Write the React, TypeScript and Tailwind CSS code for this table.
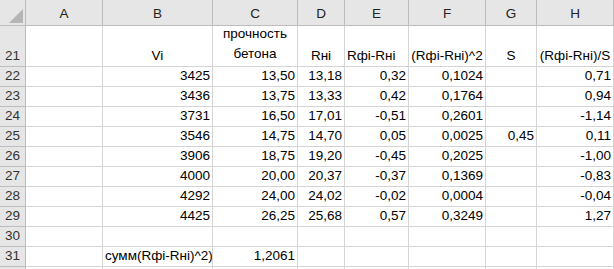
import React from 'react'

const cols = ['A', 'B', 'C', 'D', 'E', 'F', 'G', 'H']

type Row = {
  n: number
  b?: string
  c?: string
  d?: string
  e?: string
  f?: string
  g?: string
  h?: string
}

const data: Row[] = [
  { n: 22, b: '3425', c: '13,50', d: '13,18', e: '0,32', f: '0,1024', h: '0,71' },
  { n: 23, b: '3436', c: '13,75', d: '13,33', e: '0,42', f: '0,1764', h: '0,94' },
  { n: 24, b: '3731', c: '16,50', d: '17,01', e: '-0,51', f: '0,2601', h: '-1,14' },
  { n: 25, b: '3546', c: '14,75', d: '14,70', e: '0,05', f: '0,0025', g: '0,45', h: '0,11' },
  { n: 26, b: '3906', c: '18,75', d: '19,20', e: '-0,45', f: '0,2025', h: '-1,00' },
  { n: 27, b: '4000', c: '20,00', d: '20,37', e: '-0,37', f: '0,1369', h: '-0,83' },
  { n: 28, b: '4292', c: '24,00', d: '24,02', e: '-0,02', f: '0,0004', h: '-0,04' },
  { n: 29, b: '4425', c: '26,25', d: '25,68', e: '0,57', f: '0,3249', h: '1,27' },
  { n: 30 },
]

function RowHead({ n }: { n?: number }) {
  return (
    <div className="bg-[#e6e6e6] border-r border-b border-[#bcbcbc] flex items-end justify-center pb-[2px] text-[#333]">
      {n}
    </div>
  )
}

function Num({ v }: { v?: string }) {
  return (
    <div className="border-r border-b border-[#d4d4d4] flex items-end justify-end pr-[2px] pb-[2px] whitespace-nowrap">
      {v}
    </div>
  )
}

export default function App() {
  return (
    <div className="w-[614px] h-[269px] overflow-hidden bg-white text-black text-[13.5px] leading-[17px] font-['Liberation_Sans',Arial,sans-serif]">
      <div className="grid grid-cols-[26px_77px_110px_85px_47px_64px_77px_51px_77px] grid-rows-[26px_41px_repeat(11,20px)]">
        {/* corner */}
        <div className="bg-[#e6e6e6] border-r border-b border-[#bcbcbc] flex items-end justify-end pr-[2px] pb-[2px]">
          <svg width="14" height="14" viewBox="0 0 14 14">
            <polygon points="14,0 14,14 0,14" fill="#b5b5b5" />
          </svg>
        </div>
        {cols.map((c) => (
          <div
            key={c}
            className="bg-[#e6e6e6] border-r border-b border-[#bcbcbc] flex items-end justify-center pb-[3px] text-[#222]"
          >
            {c}
          </div>
        ))}

        {/* row 21 - headers */}
        <RowHead n={21} />
        <div className="border-r border-b border-[#d4d4d4]" />
        <div className="border-r border-b border-[#d4d4d4] flex items-end justify-center pb-[2px]">Vi</div>
        <div className="border-r border-b border-[#d4d4d4] flex flex-col items-center justify-end pb-[2px] leading-[20px]">
          <span>прочность</span>
          <span>бетона</span>
        </div>
        <div className="border-r border-b border-[#d4d4d4] flex items-end justify-center pb-[2px]">Rнi</div>
        <div className="border-r border-b border-[#d4d4d4] flex items-end pl-[2px] pb-[2px] whitespace-nowrap">Rфi-Rнi</div>
        <div className="border-r border-b border-[#d4d4d4] flex items-end justify-center pb-[2px] whitespace-nowrap overflow-hidden">(Rфi-Rнi)^2</div>
        <div className="border-r border-b border-[#d4d4d4] flex items-end justify-center pb-[2px]">S</div>
        <div className="border-r border-b border-[#d4d4d4] flex items-end justify-center pb-[2px] whitespace-nowrap overflow-hidden">(Rфi-Rнi)/S</div>

        {data.map((r) => (
          <React.Fragment key={r.n}>
            <RowHead n={r.n} />
            <Num />
            <Num v={r.b} />
            <Num v={r.c} />
            <Num v={r.d} />
            <Num v={r.e} />
            <Num v={r.f} />
            <Num v={r.g} />
            <Num v={r.h} />
          </React.Fragment>
        ))}

        {/* row 31 - sum */}
        <RowHead n={31} />
        <Num />
        <div className="border-r border-b border-[#d4d4d4] flex items-end pl-[2px] pb-[2px] whitespace-nowrap overflow-hidden">
          сумм(Rфi-Rнi)^2)
        </div>
        <Num v="1,2061" />
        <Num />
        <Num />
        <Num />
        <Num />
        <Num />

        {/* row 32 - only its top edge shows */}
        <RowHead />
        <Num />
        <Num />
        <Num />
        <Num />
        <Num />
        <Num />
        <Num />
        <Num />
      </div>
    </div>
  )
}
